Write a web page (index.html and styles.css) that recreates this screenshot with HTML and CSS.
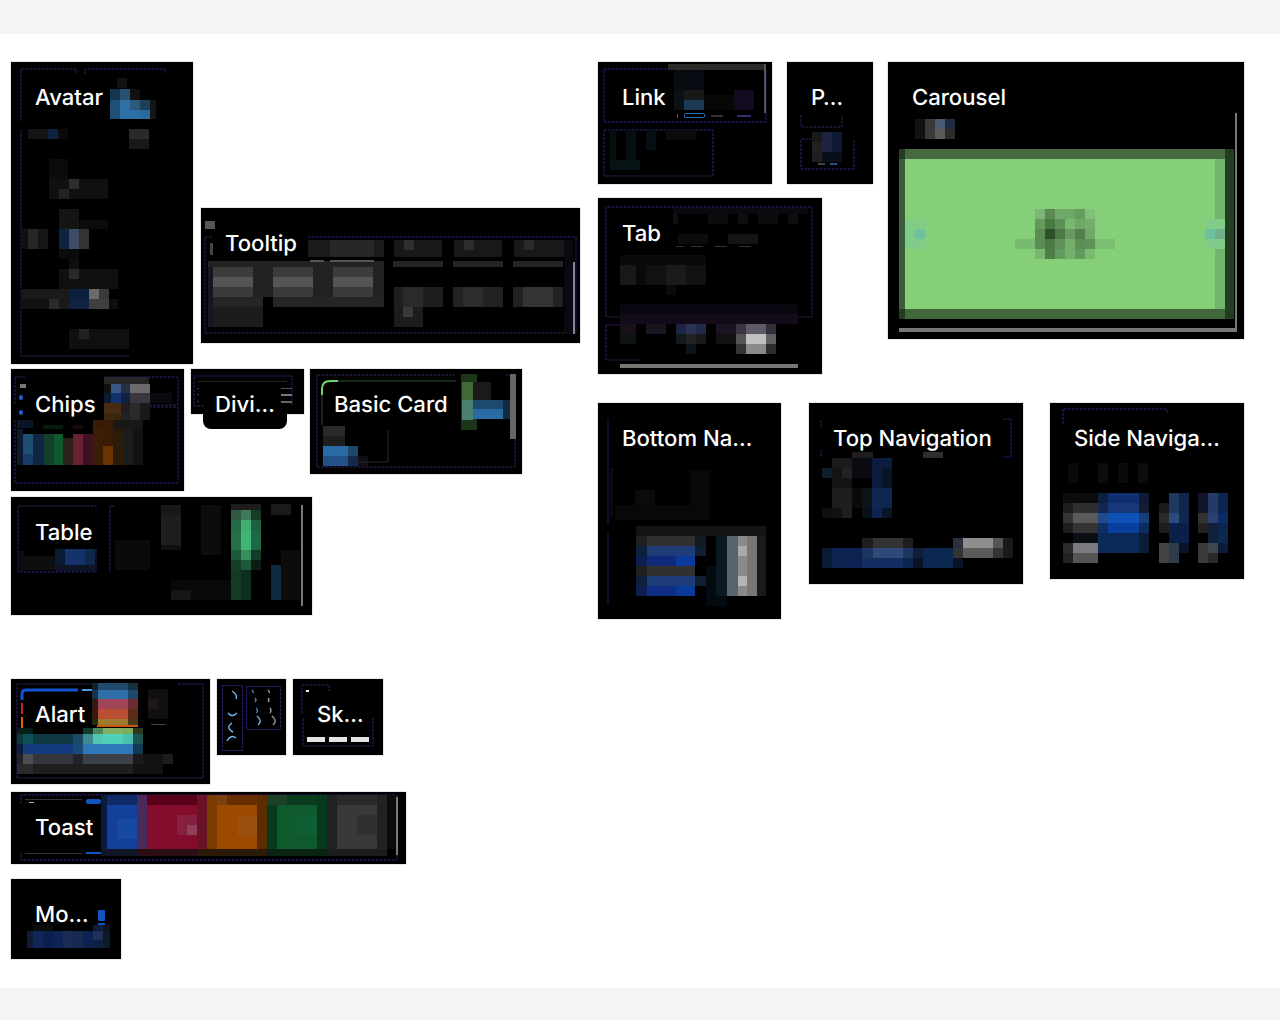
FILE: index.html
```html
<!DOCTYPE html>
<html lang="en">
<head>
<meta charset="utf-8">
<title>Components</title>
<link rel="stylesheet" href="styles.css">
</head>
<body>
<header class="bar"></header>
<main class="canvas">

<section class="card c-avatar"><div class="label">Avatar</div>
<svg class="art" viewBox="11 62 182 302">
<path class="dash" d="M21 121V69H76V74M85 74V69H165V73M21 130V356H129"/>
<rect x="117" y="78" width="10" height="10" fill="#111"/>
<rect x="110" y="89" width="10" height="11" fill="#15354f"/><rect x="120" y="89" width="10" height="11" fill="#26506f"/><rect x="130" y="89" width="10" height="11" fill="#111"/>
<rect x="110" y="100" width="10" height="10" fill="#1f4f77"/><rect x="120" y="100" width="10" height="10" fill="#2f6fa8"/><rect x="130" y="100" width="10" height="10" fill="#2a5a80"/><rect x="140" y="100" width="10" height="10" fill="#1d4058"/><rect x="150" y="100" width="6" height="10" fill="#151515"/>
<rect x="110" y="110" width="10" height="9" fill="#1f4f77"/><rect x="120" y="110" width="20" height="9" fill="#2f6fa8"/><rect x="140" y="110" width="10" height="9" fill="#2a6a9c"/><rect x="150" y="110" width="6" height="9" fill="#151515"/>
<rect x="28" y="129" width="20" height="10" fill="#141414"/><rect x="48" y="129" width="10" height="10" fill="#0e2340"/><rect x="58" y="129" width="10" height="10" fill="#0a0a0a"/>
<rect x="129" y="129" width="20" height="10" fill="#2a2a2a"/><rect x="129" y="139" width="20" height="10" fill="#181818"/>
<rect x="49" y="159" width="19" height="20" fill="#0b0b0b"/>
<rect x="49" y="179" width="59" height="20" fill="#101010"/><rect x="69" y="179" width="10" height="10" fill="#2e2e2e"/><rect x="59" y="189" width="10" height="10" fill="#222"/>
<rect x="59" y="209" width="20" height="20" fill="#141414"/><rect x="79" y="220" width="29" height="9" fill="#0c0c0c"/>
<rect x="22" y="229" width="6" height="20" fill="#111"/><rect x="28" y="229" width="10" height="20" fill="#272727"/><rect x="38" y="229" width="10" height="20" fill="#161616"/><rect x="59" y="229" width="10" height="20" fill="#0d2340"/><rect x="69" y="229" width="10" height="20" fill="#3f4a63"/><rect x="79" y="229" width="10" height="20" fill="#333"/>
<rect x="59" y="249" width="20" height="10" fill="#0b0b0b"/><rect x="69" y="259" width="10" height="10" fill="#0e0e0e"/>
<rect x="59" y="269" width="59" height="20" fill="#101010"/><rect x="69" y="269" width="10" height="10" fill="#2a2a2a"/>
<rect x="22" y="289" width="47" height="10" fill="#1a1a1a"/><rect x="69" y="289" width="20" height="10" fill="#0c1f3c"/><rect x="89" y="289" width="10" height="10" fill="#6a6a6a"/><rect x="99" y="289" width="10" height="10" fill="#3a3a3a"/>
<rect x="22" y="299" width="27" height="10" fill="#121212"/><rect x="49" y="299" width="10" height="10" fill="#2a2a2a"/><rect x="59" y="299" width="10" height="10" fill="#1a1a1a"/><rect x="69" y="299" width="20" height="10" fill="#0e2344"/><rect x="89" y="299" width="20" height="10" fill="#3f3f3f"/><rect x="109" y="299" width="9" height="10" fill="#0e0e0e"/>
<rect x="69" y="329" width="60" height="20" fill="#101010"/><rect x="79" y="329" width="10" height="10" fill="#222"/>
</svg></section>

<section class="card c-tooltip"><div class="label">Tooltip</div>
<svg class="art" viewBox="201 208 379 135">
<path class="dash" d="M205 333V237H213M308 237H576V333H205"/>
<rect x="205" y="221" width="10" height="8" fill="#555"/><rect x="210" y="243" width="3" height="12" fill="#444"/>
<rect x="308" y="240" width="76" height="17" fill="#1a1a1a"/><rect x="330" y="240" width="44" height="17" fill="#262626"/>
<rect x="394" y="240" width="48" height="17" fill="#181818"/><rect x="404" y="240" width="10" height="10" fill="#2e2e2e"/><rect x="454" y="240" width="48" height="17" fill="#181818"/><rect x="464" y="240" width="10" height="10" fill="#2c2c2c"/><rect x="514" y="240" width="50" height="17" fill="#181818"/><rect x="524" y="240" width="10" height="10" fill="#2a2a2a"/>
<rect x="208" y="261" width="176" height="6" fill="#222"/><rect x="310" y="260" width="14" height="2" fill="#555"/><rect x="330" y="260" width="44" height="2" fill="#555"/>
<rect x="208" y="267" width="5" height="60" fill="#181420"/>
<rect x="213" y="267" width="40" height="10" fill="#3c3c3c"/><rect x="213" y="277" width="40" height="10" fill="#555"/><rect x="213" y="287" width="40" height="10" fill="#3a3a3a"/>
<rect x="273" y="267" width="40" height="10" fill="#3c3c3c"/><rect x="273" y="277" width="40" height="10" fill="#555"/><rect x="273" y="287" width="40" height="10" fill="#3a3a3a"/>
<rect x="333" y="267" width="40" height="10" fill="#3c3c3c"/><rect x="333" y="277" width="40" height="10" fill="#555"/><rect x="333" y="287" width="40" height="10" fill="#3a3a3a"/>
<rect x="253" y="267" width="20" height="30" fill="#222"/><rect x="313" y="267" width="20" height="30" fill="#222"/><rect x="373" y="267" width="11" height="30" fill="#222"/>
<rect x="213" y="297" width="50" height="10" fill="#252525"/><rect x="273" y="297" width="111" height="10" fill="#252525"/>
<rect x="213" y="307" width="50" height="20" fill="#1c1c1c"/>
<rect x="393" y="261" width="50" height="6" fill="#242424"/><rect x="453" y="261" width="50" height="6" fill="#242424"/><rect x="513" y="261" width="50" height="6" fill="#242424"/>
<rect x="394" y="287" width="49" height="20" fill="#1e1e1e"/><rect x="403" y="287" width="20" height="20" fill="#2a2a2a"/><rect x="453" y="287" width="50" height="20" fill="#222"/><rect x="463" y="287" width="20" height="20" fill="#2c2c2c"/><rect x="513" y="287" width="50" height="20" fill="#222"/><rect x="523" y="287" width="30" height="20" fill="#333"/>
<rect x="394" y="307" width="29" height="20" fill="#1c1c1c"/><rect x="403" y="307" width="10" height="10" fill="#3a3a3a"/>
<rect x="564" y="240" width="9" height="94" fill="#0c0810"/><rect x="573" y="262" width="2" height="72" fill="#8a7fa0"/>
</svg></section>

<section class="card c-chips"><div class="label">Chips</div>
<svg class="art" viewBox="11 369 173 122">
<path class="dash" d="M104 377H178V405H104M105 407H178V483H15V420M15 377H25M15 377V405"/>
<rect x="20" y="384" width="6" height="4" fill="#777"/><rect x="19" y="395" width="4" height="5" rx="2" fill="#1f5fd0"/><rect x="19" y="410" width="4" height="5" rx="2" fill="#1f5fd0"/>
<rect x="104" y="377" width="45" height="7" fill="#262626"/>
<rect x="104" y="384" width="7" height="9" fill="#111"/><rect x="111" y="384" width="10" height="9" fill="#3c5785"/><rect x="121" y="384" width="9" height="9" fill="#222f45"/><rect x="130" y="384" width="20" height="9" fill="#6a6a6a"/>
<rect x="104" y="393" width="7" height="10" fill="#0a1a33"/><rect x="111" y="393" width="10" height="10" fill="#12326c"/><rect x="121" y="393" width="9" height="10" fill="#102244"/><rect x="130" y="393" width="20" height="10" fill="#3a3640"/><rect x="150" y="393" width="22" height="10" fill="#0c0810"/>
<rect x="104" y="403" width="17" height="10" fill="#4a2a10"/><rect x="121" y="403" width="9" height="10" fill="#201c20"/><rect x="130" y="403" width="10" height="10" fill="#2f2a2a"/><rect x="140" y="403" width="10" height="10" fill="#1a1a1a"/>
<rect x="104" y="413" width="17" height="7" fill="#3d260e"/><rect x="121" y="413" width="9" height="7" fill="#222"/><rect x="130" y="413" width="10" height="7" fill="#2a2a2a"/><rect x="140" y="413" width="10" height="7" fill="#181818"/>
<rect x="17" y="420" width="16" height="8" fill="#091529"/><rect x="43" y="425" width="20" height="4" fill="#051a0c"/><rect x="73" y="425" width="10" height="4" fill="#1a0510"/><rect x="93" y="420" width="20" height="9" fill="#3a1a05"/><rect x="113" y="420" width="30" height="9" fill="#181818"/>
<rect x="17" y="429" width="6" height="36" fill="#0a1a33"/><rect x="23" y="434" width="10" height="20" fill="#1d4f73"/><rect x="23" y="454" width="10" height="11" fill="#1a3a6a"/><rect x="33" y="434" width="11" height="31" fill="#0f2540"/>
<rect x="44" y="434" width="10" height="31" fill="#13402a"/><rect x="54" y="434" width="9" height="31" fill="#0f5a2c"/><rect x="63" y="438" width="10" height="27" fill="#2a2218"/>
<rect x="73" y="434" width="10" height="31" fill="#6a2233"/><rect x="83" y="434" width="10" height="31" fill="#3f1020"/><rect x="93" y="429" width="10" height="36" fill="#3a1e05"/>
<rect x="103" y="429" width="10" height="22" fill="#3a1a05"/><rect x="103" y="446" width="10" height="19" fill="#6a3400"/><rect x="113" y="429" width="10" height="36" fill="#2a1c08"/>
<rect x="123" y="429" width="10" height="36" fill="#1c1c1c"/><rect x="133" y="429" width="10" height="36" fill="#121212"/>
</svg></section>

<section class="card c-divider"><div class="label">Divi…</div>
<svg class="art" viewBox="191 369 113 45">
<path class="dash" d="M204 406H194V376H292V406"/>
<rect x="197" y="381" width="90" height="1" fill="#222"/><rect x="281" y="388" width="11" height="1" fill="#555"/><rect x="281" y="394" width="11" height="2" fill="#777"/><rect x="281" y="401" width="11" height="2" fill="#666"/><rect x="197" y="388" width="2" height="1" fill="#444"/><rect x="197" y="394" width="2" height="1" fill="#444"/><rect x="197" y="401" width="2" height="1" fill="#444"/>
</svg></section>

<section class="card c-basic"><div class="label">Basic Card</div>
<svg class="art" viewBox="310 369 212 105">
<path class="dash" d="M317 375H455M506 375H515V467H317V375"/>
<path class="thin-green" d="M330 381H456M322 395V425"/>
<path class="card-edge" d="M322 395V389Q322 381 330 381H338"/>
<rect x="461" y="374" width="16" height="56" fill="#1c3418"/><rect x="462" y="382" width="11" height="18" fill="#3f6a38"/><rect x="462" y="400" width="11" height="20" fill="#4a8070"/>
<rect x="473" y="382" width="18" height="18" fill="#1a1a1a"/><rect x="473" y="400" width="30" height="9" fill="#1f4a6f"/><rect x="473" y="409" width="30" height="10" fill="#2a6aa5"/><rect x="503" y="400" width="9" height="19" fill="#112a3f"/>
<rect x="510" y="374" width="6" height="65" fill="#666"/>
<rect x="323" y="426" width="22" height="10" fill="#2a2a2a"/><rect x="323" y="436" width="22" height="10" fill="#1e1e1e"/>
<rect x="323" y="446" width="25" height="10" fill="#2a6aa5"/><rect x="323" y="456" width="25" height="10" fill="#24508a"/><rect x="348" y="446" width="10" height="10" fill="#1e4868"/><rect x="348" y="456" width="10" height="10" fill="#142a48"/><rect x="358" y="456" width="10" height="10" fill="#0e0e14"/>
<path class="thin" d="M388 430V462H358"/>
</svg></section>

<section class="card c-table"><div class="label">Table</div>
<svg class="art" viewBox="11 497 301 118">
<path class="dash" d="M18 549V506H96V509M96 549V572H18V549M114 506H110V572"/>
<rect x="18" y="551" width="6" height="20" fill="#0e0a16"/><rect x="24" y="556" width="31" height="14" fill="#0e0e0e"/>
<rect x="55" y="549" width="10" height="16" fill="#0a1a33"/><rect x="65" y="549" width="20" height="16" fill="#15336a"/><rect x="85" y="549" width="10" height="16" fill="#10264a"/><rect x="55" y="565" width="40" height="6" fill="#0e1424"/>
<rect x="115" y="540" width="35" height="30" fill="#0a0a0a"/>
<rect x="161" y="505" width="20" height="10" fill="#181818"/><rect x="161" y="515" width="20" height="30" fill="#1e1e1e"/><rect x="161" y="545" width="20" height="5" fill="#101010"/><rect x="201" y="505" width="20" height="50" fill="#0c0c0c"/>
<rect x="231" y="504" width="30" height="6" fill="#1c1c1c"/>
<rect x="231" y="510" width="10" height="10" fill="#2f5a3f"/><rect x="241" y="510" width="10" height="10" fill="#3f7a5a"/><rect x="251" y="510" width="10" height="10" fill="#1a3a28"/>
<rect x="231" y="520" width="10" height="10" fill="#256a45"/><rect x="241" y="520" width="10" height="10" fill="#3fb070"/><rect x="251" y="520" width="10" height="10" fill="#1f6040"/>
<rect x="231" y="530" width="10" height="20" fill="#267048"/><rect x="241" y="530" width="10" height="20" fill="#40b578"/><rect x="251" y="530" width="10" height="20" fill="#206845"/>
<rect x="231" y="550" width="10" height="10" fill="#1e5a3a"/><rect x="241" y="550" width="10" height="10" fill="#35905f"/><rect x="251" y="550" width="10" height="10" fill="#143a28"/>
<rect x="231" y="560" width="10" height="10" fill="#144028"/><rect x="241" y="560" width="10" height="10" fill="#1e5a3a"/><rect x="251" y="560" width="10" height="10" fill="#0a1e14"/>
<rect x="231" y="570" width="10" height="30" fill="#123a24"/><rect x="241" y="570" width="10" height="30" fill="#0f2e1e"/>
<rect x="171" y="580" width="60" height="20" fill="#090909"/><rect x="171" y="590" width="20" height="10" fill="#161616"/>
<rect x="271" y="504" width="20" height="11" fill="#1a1a1a"/><rect x="271" y="565" width="10" height="35" fill="#0f2a3f"/><rect x="281" y="550" width="19" height="50" fill="#0c0c0c"/>
<rect x="301" y="505" width="2" height="101" fill="#777"/>
</svg></section>

<section class="card c-link"><div class="label">Link</div>
<svg class="art" viewBox="598 62 174 122">
<path class="dash" d="M674 69H766V122H604V69H668M604 130H713V176H604V130"/>
<rect x="668" y="64" width="97" height="6" fill="#2a2a2a"/><rect x="764" y="64" width="2" height="49" fill="#555"/>
<rect x="674" y="70" width="30" height="20" fill="#070c12"/><rect x="684" y="90" width="20" height="10" fill="#181818"/><rect x="674" y="90" width="10" height="20" fill="#0a1014"/><rect x="684" y="100" width="20" height="10" fill="#1c3a55"/>
<rect x="734" y="90" width="20" height="20" fill="#130a20"/><rect x="704" y="95" width="30" height="15" fill="#070707"/>
<rect x="684.5" y="113.5" width="20" height="4" rx="1" fill="none" stroke="#2f6fc0"/><rect x="711" y="115" width="12" height="2" fill="#333"/><rect x="737" y="115" width="14" height="2" fill="#3f2a70"/><rect x="677" y="114" width="1" height="4" fill="#555"/>
<rect x="610" y="130" width="6" height="30" fill="#060f12"/><rect x="626" y="130" width="10" height="30" fill="#060f12"/><rect x="646" y="130" width="10" height="20" fill="#060f12"/><rect x="610" y="160" width="30" height="10" fill="#071214"/><rect x="666" y="130" width="30" height="10" fill="#0b0b0b"/>
</svg></section>

<section class="card c-p"><div class="label">P…</div>
<svg class="art" viewBox="787 62 86 122">
<path class="dash" d="M801 115V127H842V115M812 139H801V169H854V140"/>
<rect x="812" y="132" width="10" height="10" fill="#1a1a1a"/><rect x="822" y="132" width="10" height="10" fill="#1e2340"/><rect x="832" y="132" width="10" height="10" fill="#0e1a33"/>
<rect x="812" y="142" width="10" height="10" fill="#222"/><rect x="822" y="142" width="10" height="10" fill="#1e2340"/><rect x="832" y="142" width="10" height="10" fill="#0e1a33"/>
<rect x="812" y="152" width="10" height="10" fill="#1e1e1e"/><rect x="822" y="152" width="20" height="10" fill="#0a0e18"/>
<rect x="818" y="163" width="7" height="2" fill="#444"/><rect x="830" y="163" width="7" height="2" fill="#1f4f90"/>
</svg></section>

<section class="card c-carousel"><div class="label">Carousel</div>
<svg class="art" viewBox="888 62 356 277">
<rect x="915" y="119" width="10" height="20" fill="#111"/><rect x="925" y="119" width="10" height="20" fill="#3a3a3a"/><rect x="935" y="119" width="10" height="10" fill="#4a5a72"/><rect x="935" y="129" width="10" height="10" fill="#5a5a5a"/><rect x="945" y="119" width="10" height="10" fill="#1f2c3f"/><rect x="945" y="129" width="10" height="10" fill="#2c2c2c"/>
<rect x="899" y="149" width="335" height="170" fill="#233d20"/><rect x="899" y="159" width="6" height="150" fill="#39603a"/>
<rect x="905" y="149" width="320" height="10" fill="#46693f"/><rect x="905" y="309" width="320" height="10" fill="#40663a"/>
<rect x="905" y="159" width="310" height="150" fill="#84cf78"/><rect x="1215" y="159" width="10" height="150" fill="#74b36c"/>
<rect x="905" y="219" width="20" height="30" fill="#80cc88"/><rect x="915" y="229" width="10" height="10" fill="#6fc0a0"/><rect x="1205" y="219" width="20" height="30" fill="#80cc88"/><rect x="1205" y="229" width="10" height="10" fill="#6fc0a0"/><rect x="1215" y="229" width="10" height="10" fill="#72b08a"/>
<rect x="1035" y="209" width="10" height="10" fill="#7db674"/><rect x="1045" y="209" width="10" height="10" fill="#5a8a52"/><rect x="1055" y="209" width="20" height="10" fill="#70a868"/><rect x="1075" y="209" width="10" height="10" fill="#669e5e"/><rect x="1085" y="209" width="10" height="10" fill="#7fc07a"/>
<rect x="1035" y="219" width="10" height="10" fill="#66995e"/><rect x="1045" y="219" width="10" height="10" fill="#477a43"/><rect x="1055" y="219" width="10" height="10" fill="#5b8f55"/><rect x="1065" y="219" width="10" height="10" fill="#78b870"/><rect x="1075" y="219" width="10" height="10" fill="#6ea867"/><rect x="1085" y="219" width="10" height="10" fill="#74ad6c"/>
<rect x="1035" y="229" width="10" height="10" fill="#5a8c54"/><rect x="1045" y="229" width="10" height="10" fill="#30502c"/><rect x="1055" y="229" width="10" height="10" fill="#4b7a47"/><rect x="1065" y="229" width="10" height="10" fill="#669a60"/><rect x="1075" y="229" width="10" height="10" fill="#537f4e"/><rect x="1085" y="229" width="10" height="10" fill="#70a868"/>
<rect x="1015" y="239" width="20" height="10" fill="#78bb70"/><rect x="1035" y="239" width="10" height="10" fill="#5a8c54"/><rect x="1045" y="239" width="10" height="10" fill="#4a7a45"/><rect x="1055" y="239" width="10" height="10" fill="#5e9258"/><rect x="1065" y="239" width="10" height="10" fill="#74b06c"/><rect x="1075" y="239" width="10" height="10" fill="#5c8e55"/><rect x="1085" y="239" width="10" height="10" fill="#5e9258"/><rect x="1095" y="239" width="20" height="10" fill="#7abe72"/>
<rect x="1035" y="249" width="10" height="10" fill="#78b870"/><rect x="1045" y="249" width="10" height="10" fill="#4e7e48"/><rect x="1055" y="249" width="10" height="10" fill="#649a5e"/><rect x="1065" y="249" width="10" height="10" fill="#74b06c"/><rect x="1075" y="249" width="10" height="10" fill="#649a5e"/><rect x="1085" y="249" width="10" height="10" fill="#78ba70"/>
<rect x="1235" y="113" width="2" height="219" fill="#777"/><rect x="899" y="328" width="338" height="4" fill="#777"/>
</svg></section>

<section class="card c-tab"><div class="label">Tab</div>
<svg class="art" viewBox="598 198 224 176">
<path class="dash" d="M812 207V317H606V207H812M606 325V360H640M606 325H620"/>
<rect x="673" y="208" width="135" height="6" fill="#0c0810"/>
<rect x="673" y="214" width="5" height="10" fill="#101010"/><rect x="708" y="214" width="20" height="10" fill="#0c0c0c"/><rect x="738" y="214" width="10" height="10" fill="#0e0e0e"/><rect x="758" y="214" width="20" height="10" fill="#0c0c0c"/><rect x="788" y="214" width="10" height="10" fill="#0e0e0e"/>
<rect x="678" y="234" width="30" height="10" fill="#0c0c0c"/><rect x="728" y="234" width="30" height="10" fill="#141414"/>
<rect x="676" y="246" width="8" height="1" fill="#333"/><rect x="691" y="246" width="12" height="1" fill="#333"/><rect x="715" y="246" width="12" height="1" fill="#333"/><rect x="739" y="246" width="12" height="1" fill="#333"/>
<rect x="620" y="255" width="86" height="10" fill="#0a0a0a"/><rect x="620" y="265" width="86" height="20" fill="#111"/><rect x="620" y="265" width="16" height="20" fill="#181818"/><rect x="666" y="265" width="20" height="20" fill="#1a1a1a"/><rect x="666" y="285" width="10" height="10" fill="#0b0b0b"/><rect x="636" y="265" width="10" height="20" fill="#090909"/>
<rect x="620" y="304" width="178" height="10" fill="#0a0610"/><rect x="620" y="314" width="178" height="10" fill="#130a1a"/>
<rect x="620" y="324" width="16" height="10" fill="#1c1018"/><rect x="646" y="324" width="20" height="10" fill="#1a1420"/><rect x="716" y="324" width="20" height="10" fill="#1a1420"/>
<rect x="676" y="324" width="10" height="10" fill="#1c2444"/><rect x="686" y="324" width="10" height="10" fill="#2e3258"/><rect x="696" y="324" width="10" height="10" fill="#222a4a"/>
<rect x="676" y="334" width="10" height="10" fill="#131a1c"/><rect x="686" y="334" width="10" height="10" fill="#222"/><rect x="696" y="334" width="10" height="10" fill="#15191c"/><rect x="620" y="334" width="16" height="10" fill="#0e1212"/><rect x="716" y="334" width="20" height="10" fill="#111"/>
<rect x="686" y="344" width="10" height="10" fill="#0c1420"/>
<rect x="736" y="324" width="10" height="10" fill="#3a3340"/><rect x="746" y="324" width="20" height="10" fill="#5e5a68"/><rect x="766" y="324" width="10" height="10" fill="#33303a"/>
<rect x="736" y="334" width="10" height="10" fill="#555"/><rect x="746" y="334" width="20" height="10" fill="#c0c0c0"/><rect x="766" y="334" width="10" height="10" fill="#606060"/>
<rect x="736" y="344" width="10" height="10" fill="#333"/><rect x="746" y="344" width="20" height="10" fill="#8a8a8a"/><rect x="766" y="344" width="10" height="10" fill="#2e2e2e"/>
<rect x="620" y="364" width="178" height="4" fill="#777"/>
</svg></section>

<section class="card c-bottom"><div class="label">Bottom Na…</div>
<svg class="art" viewBox="598 403 183 216">
<path class="dash" d="M608 419V466M608 467V525M608 532V605"/>
<rect x="610" y="468" width="3" height="50" fill="#0e0814"/>
<rect x="690" y="470" width="20" height="50" fill="#080808"/><rect x="635" y="490" width="20" height="30" fill="#0b0b0b"/><rect x="615" y="505" width="95" height="15" fill="#080808"/>
<rect x="636" y="526" width="130" height="10" fill="#141414"/>
<rect x="636" y="536" width="70" height="10" fill="#303030"/><rect x="636" y="536" width="11" height="10" fill="#202020"/><rect x="695" y="536" width="11" height="10" fill="#141a22"/>
<rect x="636" y="546" width="11" height="10" fill="#0e1f3c"/><rect x="647" y="546" width="48" height="10" fill="#1e3d78"/><rect x="695" y="546" width="11" height="10" fill="#111e33"/>
<rect x="636" y="556" width="11" height="10" fill="#0c1f50"/><rect x="647" y="556" width="48" height="10" fill="#0e2a78"/><rect x="676" y="556" width="19" height="10" fill="#0a3a9a"/>
<rect x="636" y="566" width="59" height="10" fill="#303030"/><rect x="636" y="566" width="11" height="10" fill="#202020"/>
<rect x="636" y="576" width="11" height="10" fill="#0e1f3c"/><rect x="647" y="576" width="48" height="10" fill="#1e3d78"/><rect x="695" y="576" width="11" height="10" fill="#111e33"/>
<rect x="636" y="586" width="11" height="10" fill="#0c1f50"/><rect x="647" y="586" width="48" height="10" fill="#0f2f85"/><rect x="676" y="586" width="19" height="10" fill="#0a3a9a"/>
<rect x="706" y="566" width="21" height="40" fill="#030a10"/><rect x="716" y="536" width="11" height="60" fill="#0a1820"/>
<rect x="727" y="536" width="11" height="60" fill="#566470"/><rect x="738" y="536" width="9" height="60" fill="#8a8a8a"/><rect x="738" y="546" width="9" height="10" fill="#aaa"/><rect x="738" y="576" width="9" height="10" fill="#b5b5b5"/><rect x="747" y="536" width="10" height="60" fill="#777"/><rect x="757" y="536" width="9" height="60" fill="#1a1a1a"/>
</svg></section>

<section class="card c-top"><div class="label">Top Navigation</div>
<svg class="art" viewBox="809 403 214 181">
<path class="dash" d="M821 427V419M821 450V457M1003 419H1011V457H1003"/>
<rect x="852" y="452" width="21" height="6" fill="#1e1e1e"/><rect x="923" y="452" width="20" height="6" fill="#2e2e2e"/>
<rect x="832" y="458" width="20" height="10" fill="#1a1a1a"/><rect x="852" y="458" width="20" height="10" fill="#0a0a10"/><rect x="872" y="458" width="20" height="10" fill="#0c1c40"/>
<rect x="822" y="468" width="10" height="10" fill="#0f1f2f"/><rect x="832" y="468" width="10" height="10" fill="#141414"/><rect x="842" y="468" width="10" height="10" fill="#222"/><rect x="852" y="468" width="20" height="10" fill="#0a0a10"/><rect x="872" y="468" width="10" height="10" fill="#0c1c40"/><rect x="882" y="468" width="10" height="10" fill="#081428"/>
<rect x="832" y="478" width="20" height="10" fill="#141414"/><rect x="872" y="478" width="10" height="10" fill="#0c1c40"/><rect x="882" y="478" width="10" height="10" fill="#081428"/>
<rect x="832" y="488" width="20" height="20" fill="#1e1e1e"/><rect x="852" y="488" width="10" height="20" fill="#0a0a0a"/><rect x="862" y="488" width="10" height="20" fill="#0c141a"/><rect x="872" y="488" width="20" height="20" fill="#0e2650"/>
<rect x="822" y="508" width="10" height="10" fill="#0e0e0e"/><rect x="832" y="508" width="10" height="10" fill="#111"/><rect x="842" y="508" width="10" height="10" fill="#1e1e1e"/><rect x="862" y="508" width="10" height="10" fill="#08101c"/><rect x="872" y="508" width="10" height="10" fill="#0c2450"/><rect x="882" y="508" width="10" height="10" fill="#081428"/>
<rect x="862" y="538" width="11" height="10" fill="#1e1e1e"/><rect x="873" y="538" width="30" height="10" fill="#333"/><rect x="903" y="538" width="10" height="10" fill="#1e1e1e"/><rect x="953" y="538" width="10" height="10" fill="#2a3040"/><rect x="963" y="538" width="30" height="10" fill="#8e8e8e"/><rect x="993" y="538" width="10" height="10" fill="#555"/><rect x="1003" y="538" width="10" height="10" fill="#1a1a1a"/>
<rect x="822" y="548" width="10" height="10" fill="#0a1a33"/><rect x="832" y="548" width="30" height="10" fill="#0c2250"/><rect x="862" y="548" width="11" height="10" fill="#1e3560"/><rect x="873" y="548" width="30" height="10" fill="#2f4a78"/><rect x="903" y="548" width="10" height="10" fill="#1e3560"/><rect x="913" y="548" width="10" height="10" fill="#101e3a"/><rect x="923" y="548" width="30" height="10" fill="#0d2850"/><rect x="953" y="548" width="10" height="10" fill="#333"/><rect x="963" y="548" width="30" height="10" fill="#5a5a5a"/><rect x="993" y="548" width="10" height="10" fill="#333"/><rect x="1003" y="548" width="10" height="10" fill="#1a1a1a"/>
<rect x="822" y="558" width="10" height="10" fill="#0a1a33"/><rect x="832" y="558" width="30" height="10" fill="#0c2250"/><rect x="862" y="558" width="41" height="10" fill="#152c60"/><rect x="903" y="558" width="10" height="10" fill="#0c2250"/><rect x="913" y="558" width="10" height="10" fill="#0a1428"/><rect x="923" y="558" width="30" height="10" fill="#0d2850"/><rect x="953" y="558" width="10" height="10" fill="#0a1428"/>
</svg></section>

<section class="card c-side"><div class="label">Side Naviga…</div>
<svg class="art" viewBox="1050 403 194 176">
<path class="dash" d="M1063 424V409H1167V414"/>
<rect x="1068" y="463" width="10" height="20" fill="#0a0a0a"/><rect x="1098" y="463" width="10" height="20" fill="#0c0c0c"/><rect x="1118" y="463" width="10" height="20" fill="#0a0a0a"/><rect x="1138" y="463" width="10" height="20" fill="#0c0c0c"/>
<rect x="1063" y="493" width="35" height="10" fill="#0c0c0c"/>
<rect x="1098" y="493" width="10" height="10" fill="#102040"/><rect x="1108" y="493" width="31" height="10" fill="#0f3070"/><rect x="1139" y="493" width="10" height="10" fill="#101a33"/>
<rect x="1063" y="503" width="10" height="10" fill="#1e1e1e"/><rect x="1073" y="503" width="25" height="10" fill="#2e2e2e"/><rect x="1098" y="503" width="10" height="10" fill="#122850"/><rect x="1108" y="503" width="31" height="10" fill="#163878"/><rect x="1139" y="503" width="10" height="10" fill="#141e30"/>
<rect x="1063" y="513" width="10" height="10" fill="#333"/><rect x="1073" y="513" width="25" height="10" fill="#5a5a5a"/><rect x="1098" y="513" width="10" height="10" fill="#234a8a"/><rect x="1108" y="513" width="31" height="10" fill="#0f52b5"/><rect x="1139" y="513" width="10" height="10" fill="#17407a"/>
<rect x="1063" y="523" width="10" height="10" fill="#1e1e1e"/><rect x="1073" y="523" width="25" height="10" fill="#333"/><rect x="1098" y="523" width="10" height="10" fill="#102f60"/><rect x="1108" y="523" width="31" height="10" fill="#0a3fa0"/><rect x="1139" y="523" width="10" height="10" fill="#0e2c5c"/>
<rect x="1073" y="533" width="25" height="10" fill="#0a0f16"/><rect x="1098" y="533" width="51" height="20" fill="#0c2a58"/><rect x="1139" y="533" width="10" height="20" fill="#0c1c38"/>
<rect x="1063" y="543" width="10" height="10" fill="#2a2a2a"/><rect x="1073" y="543" width="25" height="10" fill="#7a7a80"/>
<rect x="1063" y="553" width="10" height="10" fill="#222"/><rect x="1073" y="553" width="25" height="10" fill="#555"/>
<rect x="1159" y="503" width="10" height="10" fill="#1a1a1a"/><rect x="1169" y="493" width="10" height="20" fill="#1e3a60"/><rect x="1179" y="493" width="10" height="20" fill="#10264a"/>
<rect x="1159" y="513" width="10" height="10" fill="#2a2a2a"/><rect x="1169" y="513" width="10" height="10" fill="#2a4a80"/><rect x="1179" y="513" width="10" height="10" fill="#10264a"/>
<rect x="1159" y="523" width="10" height="10" fill="#1e1e1e"/><rect x="1169" y="523" width="20" height="20" fill="#0a2048"/>
<rect x="1159" y="543" width="10" height="20" fill="#444"/><rect x="1169" y="543" width="10" height="20" fill="#2f3a4a"/><rect x="1179" y="543" width="10" height="10" fill="#0a1428"/>
<rect x="1198" y="493" width="10" height="20" fill="#141428"/><rect x="1208" y="493" width="10" height="20" fill="#243a6a"/><rect x="1218" y="493" width="10" height="20" fill="#0e2450"/>
<rect x="1198" y="513" width="10" height="10" fill="#333"/><rect x="1208" y="513" width="10" height="10" fill="#2a4070"/><rect x="1218" y="513" width="10" height="10" fill="#0c2c68"/>
<rect x="1198" y="523" width="10" height="10" fill="#222"/><rect x="1208" y="523" width="10" height="20" fill="#13203a"/><rect x="1218" y="523" width="10" height="20" fill="#0c2850"/>
<rect x="1198" y="543" width="10" height="20" fill="#3a3a3a"/><rect x="1208" y="543" width="10" height="10" fill="#3f4650"/><rect x="1208" y="553" width="10" height="10" fill="#2a2a2a"/><rect x="1218" y="543" width="10" height="10" fill="#0c1c38"/>
</svg></section>

<section class="card c-alert"><div class="label">Alart</div>
<svg class="art" viewBox="11 679 199 105">
<path class="dash" d="M17 778V684H92M178 684H203V778H17"/>
<path class="edge-blue" d="M22 700V694Q22 690 26 690H78"/><rect x="21" y="703" width="2" height="11" fill="#c81e3a"/><rect x="21" y="717" width="2" height="11" fill="#e06010"/><rect x="82" y="689" width="10" height="2" fill="#4a9ae0"/>
<rect x="92" y="683" width="6" height="7" fill="#112233"/><rect x="98" y="683" width="30" height="7" fill="#1f4a6a"/><rect x="128" y="683" width="10" height="7" fill="#153040"/>
<rect x="92" y="690" width="6" height="9" fill="#1a3348"/><rect x="98" y="690" width="30" height="9" fill="#2f70a8"/><rect x="128" y="690" width="10" height="9" fill="#1c4a6a"/>
<rect x="92" y="699" width="6" height="10" fill="#351818"/><rect x="98" y="699" width="30" height="10" fill="#a04558"/><rect x="128" y="699" width="10" height="10" fill="#6e2a34"/>
<rect x="92" y="709" width="6" height="10" fill="#3a1a10"/><rect x="98" y="709" width="30" height="10" fill="#b84f32"/><rect x="128" y="709" width="10" height="10" fill="#5e2a18"/>
<rect x="92" y="719" width="6" height="6" fill="#2a2a10"/><rect x="98" y="719" width="30" height="6" fill="#a07a30"/><rect x="128" y="719" width="10" height="6" fill="#4a3a18"/>
<rect x="97" y="725" width="41" height="2" fill="#c85a10"/>
<rect x="148" y="689" width="20" height="30" fill="#101010"/><rect x="148" y="699" width="10" height="10" fill="#201818"/><rect x="151" y="724" width="15" height="1" fill="#444"/>
<rect x="17" y="728" width="16" height="6" fill="#062018"/><rect x="83" y="728" width="10" height="6" fill="#123a2a"/><rect x="93" y="728" width="10" height="6" fill="#4a8a5a"/><rect x="103" y="728" width="20" height="6" fill="#80b060"/><rect x="123" y="728" width="10" height="6" fill="#7aac60"/><rect x="133" y="728" width="10" height="6" fill="#2a3a18"/>
<rect x="17" y="734" width="6" height="10" fill="#0a3a3a"/><rect x="23" y="734" width="10" height="10" fill="#0f5058"/><rect x="33" y="734" width="40" height="10" fill="#0f3a44"/><rect x="73" y="734" width="10" height="10" fill="#1a4a66"/><rect x="83" y="734" width="10" height="10" fill="#3a8a90"/><rect x="93" y="734" width="10" height="10" fill="#50c8b0"/><rect x="103" y="734" width="20" height="10" fill="#50d0b8"/><rect x="123" y="734" width="10" height="10" fill="#4cc0b0"/><rect x="133" y="734" width="10" height="10" fill="#1e5550"/>
<rect x="17" y="744" width="6" height="10" fill="#0a1f3f"/><rect x="23" y="744" width="50" height="10" fill="#143a80"/><rect x="73" y="744" width="10" height="10" fill="#1a4a7a"/><rect x="83" y="744" width="50" height="10" fill="#2f78b8"/><rect x="133" y="744" width="10" height="10" fill="#123a55"/>
<rect x="17" y="754" width="6" height="10" fill="#222"/><rect x="23" y="754" width="10" height="10" fill="#4a4f55"/><rect x="33" y="754" width="40" height="10" fill="#33373c"/><rect x="73" y="754" width="10" height="10" fill="#22262a"/><rect x="83" y="754" width="50" height="10" fill="#3a3f48"/><rect x="133" y="754" width="10" height="10" fill="#1a1a1a"/><rect x="143" y="754" width="20" height="10" fill="#121212"/><rect x="163" y="754" width="10" height="10" fill="#1c1c1c"/>
<rect x="17" y="764" width="16" height="10" fill="#2a2a2a"/><rect x="33" y="764" width="100" height="10" fill="#1e1e1e"/><rect x="133" y="764" width="30" height="10" fill="#121212"/>
</svg></section>

<section class="card c-spinner">
<svg class="art" viewBox="217 679 69 76">
<rect class="dash" x="222.5" y="685.5" width="20" height="65"/><rect class="dash" x="246.5" y="686.5" width="34" height="43"/>
<path class="arc" d="M232 691Q238 695 236 699M228 713Q232 718 237 713M232 723Q225 728 233 732M227 741Q231 734 236 738"/>
<path class="arc-small" d="M252 690Q254 692 253 693M255 698Q257 700 255 702M256 708Q259 711 256 713"/>
<path class="arc-grey" d="M268 690Q270 692 269 693M268 698Q270 700 268 702M270 708Q272 711 270 713"/>
<path class="arc" d="M257 716Q263 721 258 725"/><path class="arc-grey" d="M272 716Q278 721 273 725"/>
</svg></section>

<section class="card c-skeleton"><div class="label">Sk…</div>
<svg class="art" viewBox="293 679 90 76">
<path class="dash" d="M302 714V685H329V691M303 718V746H373V718"/>
<rect x="306" y="690" width="3" height="2" fill="#eee"/>
<rect x="307" y="737" width="18" height="5" fill="#e4e4e4"/><rect x="329" y="737" width="18" height="5" fill="#e4e4e4"/><rect x="351" y="737" width="18" height="5" fill="#e4e4e4"/>
</svg></section>

<section class="card c-toast"><div class="label">Toast</div>
<svg class="art" viewBox="11 792 395 72">
<path class="dash" d="M21 804V795H397V860H21V852"/>
<rect x="25" y="799" width="57" height="1" fill="#333"/><rect x="29" y="802" width="5" height="1" fill="#aaa"/><rect x="25" y="853" width="57" height="1" fill="#333"/><rect x="86" y="799" width="15" height="5" rx="2" fill="#1055c0"/><rect x="86" y="852" width="15" height="2" fill="#1055c0"/>
<rect x="101" y="795" width="6" height="54" fill="#0a1c3c"/><rect x="107" y="795" width="30" height="10" fill="#0e2a68"/><rect x="107" y="805" width="30" height="44" fill="#12409a"/><rect x="117" y="819" width="20" height="20" fill="#164aa0"/>
<rect x="137" y="795" width="10" height="54" fill="#4a2a5a"/><rect x="147" y="795" width="50" height="10" fill="#5a0018"/><rect x="147" y="805" width="50" height="44" fill="#840c2c"/><rect x="177" y="815" width="20" height="20" fill="#862040"/><rect x="187" y="825" width="10" height="10" fill="#904058"/>
<rect x="197" y="795" width="10" height="54" fill="#6a1228"/><rect x="207" y="795" width="10" height="54" fill="#7a3a00"/><rect x="217" y="795" width="40" height="10" fill="#682e00"/><rect x="217" y="805" width="40" height="44" fill="#9c4a00"/><rect x="237" y="815" width="20" height="20" fill="#9a5010"/><rect x="217" y="795" width="10" height="10" fill="#7a4014"/>
<rect x="257" y="795" width="10" height="54" fill="#5a2c00"/><rect x="267" y="795" width="10" height="54" fill="#073a1a"/><rect x="277" y="795" width="40" height="10" fill="#083c1c"/><rect x="277" y="805" width="40" height="44" fill="#0f5a2c"/><rect x="297" y="815" width="20" height="20" fill="#0f5e34"/><rect x="267" y="795" width="20" height="10" fill="#1e4229"/>
<rect x="317" y="795" width="10" height="54" fill="#063a1a"/><rect x="327" y="795" width="10" height="54" fill="#222"/><rect x="337" y="795" width="40" height="10" fill="#2a2a2a"/><rect x="337" y="805" width="40" height="44" fill="#393939"/><rect x="357" y="815" width="20" height="20" fill="#303030"/>
<rect x="377" y="795" width="10" height="54" fill="#222"/><rect x="387" y="795" width="10" height="54" fill="#0c0c0c"/>
<rect x="101" y="849" width="36" height="7" fill="#0e1628"/><rect x="137" y="849" width="60" height="7" fill="#2a0e14"/><rect x="197" y="849" width="70" height="7" fill="#2a1a06"/><rect x="267" y="849" width="60" height="7" fill="#0a2414"/><rect x="327" y="849" width="60" height="7" fill="#1c1c1c"/>
<rect x="396" y="797" width="2" height="58" fill="#777"/>
</svg></section>

<section class="card c-modal"><div class="label">Mo…</div>
<svg class="art" viewBox="11 879 110 80">
<rect x="98" y="910" width="7" height="11" rx="1" fill="#1055c0"/><rect x="98" y="923" width="7" height="2" fill="#1055c0"/>
<rect x="33" y="925" width="20" height="6" fill="#0c0c0c"/><rect x="93" y="925" width="10" height="6" fill="#0e1c38"/><rect x="103" y="925" width="7" height="6" fill="#0c1420"/>
<rect x="27" y="931" width="6" height="17" fill="#101a33"/><rect x="33" y="931" width="10" height="17" fill="#10265a"/><rect x="43" y="931" width="10" height="17" fill="#0c2050"/><rect x="53" y="931" width="10" height="17" fill="#0f2454"/><rect x="63" y="931" width="10" height="17" fill="#1a2c55"/><rect x="73" y="931" width="10" height="17" fill="#18294f"/><rect x="83" y="931" width="10" height="17" fill="#0d2250"/><rect x="93" y="931" width="10" height="9" fill="#1e3058"/><rect x="93" y="940" width="10" height="8" fill="#0d2040"/><rect x="103" y="931" width="7" height="17" fill="#0c1a2a"/>
</svg></section>

</main>
<footer class="bar bar-bottom"></footer>
</body>
</html>
```

FILE: styles.css
```css
* { box-sizing: border-box; }

html, body { height: 100%; }

body {
  margin: 0;
  display: flex;
  flex-direction: column;
  background: #fff;
  font-family: Inter, "Liberation Sans", sans-serif;
  overflow: hidden;
}

.bar { height: 34px; flex: none; background: #f5f5f5; }
.bar-bottom { height: 32px; }

.canvas { position: relative; flex: 1; }

.card {
  position: absolute;
  background: #000;
  box-shadow: 0 0 1px rgba(0, 0, 0, 0.55);
}

.label {
  display: inline-flex;
  align-items: center;
  height: 48px;
  margin: 12px;
  padding: 0 12px;
  border-radius: 8px;
  background: #000;
  color: #fff;
  font-size: 22.1px;
  font-weight: 500;
  line-height: 1;
  white-space: nowrap;
  text-rendering: geometricPrecision;
}

.art {
  position: absolute;
  inset: 0;
  width: 100%;
  height: 100%;
  pointer-events: none;
  filter: blur(0.7px);
}

.dash { fill: none; stroke: #2e1e68; stroke-width: 1; stroke-dasharray: 3 1; }
.thin { fill: none; stroke: #2a2a2a; stroke-width: 1; }
.thin-green { fill: none; stroke: #2a4f2a; stroke-width: 1; }
.card-edge { fill: none; stroke: #6fd06f; stroke-width: 2; }
.edge-blue { fill: none; stroke: #1055d0; stroke-width: 3; }
.arc { fill: none; stroke: #6fb8f0; stroke-width: 1.4; }
.arc-small { fill: none; stroke: #4a80a8; stroke-width: 1.4; }
.arc-grey { fill: none; stroke: #999; stroke-width: 1.4; }

.c-avatar { left: 11px; top: 28px; width: 182px; height: 302px; }
.c-tooltip { left: 201px; top: 174px; width: 379px; height: 135px; }
.c-chips { left: 11px; top: 335px; width: 173px; height: 122px; }
.c-divider { left: 191px; top: 335px; width: 113px; height: 45px; }
.c-basic { left: 310px; top: 335px; width: 212px; height: 105px; }
.c-table { left: 11px; top: 463px; width: 301px; height: 118px; }
.c-link { left: 598px; top: 28px; width: 174px; height: 122px; }
.c-p { left: 787px; top: 28px; width: 86px; height: 122px; }
.c-carousel { left: 888px; top: 28px; width: 356px; height: 277px; }
.c-tab { left: 598px; top: 164px; width: 224px; height: 176px; }
.c-bottom { left: 598px; top: 369px; width: 183px; height: 216px; }
.c-top { left: 809px; top: 369px; width: 214px; height: 181px; }
.c-side { left: 1050px; top: 369px; width: 194px; height: 176px; }
.c-alert { left: 11px; top: 645px; width: 199px; height: 105px; }
.c-spinner { left: 217px; top: 645px; width: 69px; height: 76px; }
.c-skeleton { left: 293px; top: 645px; width: 90px; height: 76px; }
.c-toast { left: 11px; top: 758px; width: 395px; height: 72px; }
.c-modal { left: 11px; top: 845px; width: 110px; height: 80px; }
```
